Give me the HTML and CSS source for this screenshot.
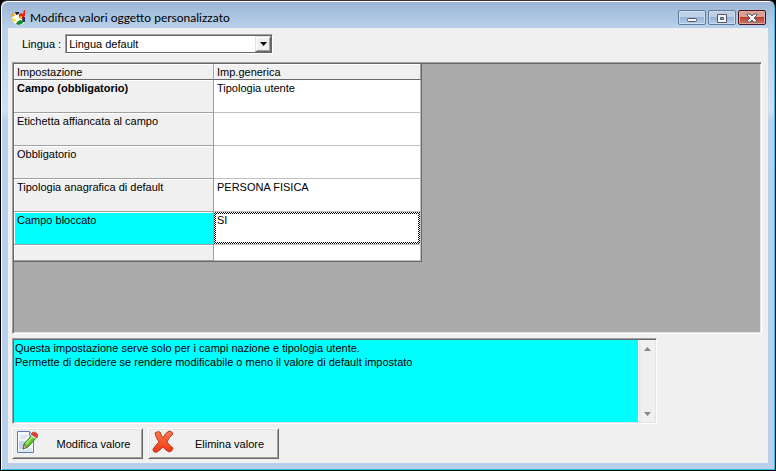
FILE: index.html
```html
<!DOCTYPE html>
<html lang="it">

<head>
    <meta charset="UTF-8" />
    <meta name="viewport" content="width=device-width, initial-scale=1.0" />
    <title>Modifica valori oggetto personalizzato</title>
    <link rel="stylesheet" href="styles.css">
</head>

<body>
    <div class="window">
        <header class="titlebar">
            <svg class="app-icon" width="16" height="16" viewBox="0 0 16 16">
                <path d="M2 4l4-2 3 2 3-1 2 2v6l-2 3-5 1-4-2-1-3-1-2z" fill="#fff" />
                <path d="M0 4l3-1 1 2-2 2-2-1z" fill="#f5a81c" />
                <path d="M4 2h4v2l-3 1z" fill="#222" />
                <path d="M1 8l3 1 2 3-4-1z" fill="#ffe600" />
                <path d="M8 4l3-1 1 1 1-4h1v6l-3 3-3-1z" fill="#e8201c" />
                <path d="M8 7l3-1v2l-2 1z" fill="#ffd21c" />
                <path d="M12 7h2v5h-2l-1-2z" fill="#25335e" />
                <path d="M6 12l3-2 3 1v2l-4 2-3-1z" fill="#128a2c" />
            </svg>
            <h1 class="title">Modifica valori oggetto personalizzato</h1>
            <div class="window-buttons">
                <button type="button" class="win-btn" aria-label="Riduci a icona">
                    <svg width="12" height="12" viewBox="0 0 12 12">
                        <rect x="1.500" y="6.500" width="9" height="3" rx="1" fill="#f5f5f5" stroke="#535666" />
                    </svg>
                </button>
                <button type="button" class="win-btn" aria-label="Ingrandisci">
                    <svg width="12" height="12" viewBox="0 0 12 12">
                        <path d="M1.500 2.500h9v8h-9z" fill="#f5f5f5" stroke="#535666" />
                        <path d="M4.500 5.500h3v2h-3z" fill="#8fb0d4" stroke="#535666" />
                    </svg>
                </button>
                <button type="button" class="win-btn win-close" aria-label="Chiudi">
                    <svg width="12" height="12" viewBox="0 0 12 12">
                        <path d="M1 2h3l2 2 2-2h3v1L8 6l3 3v1H8L6 8l-2 2H1V9l3-3-3-3z" fill="#fff" stroke="#535666" />
                    </svg>
                </button>
            </div>
        </header>

        <main class="content">
            <div class="language">
                <label for="lingua">Lingua :</label>
                <div class="combo">
                    <select id="lingua">
                        <option>Lingua default</option>
                    </select>
                    <span class="combo-arrow">
                        <svg width="7" height="4" viewBox="0 0 7 4">
                            <path d="M0 0h7L3.5 4z" fill="#000" />
                        </svg>
                    </span>
                </div>
            </div>

            <div class="grid-panel">
                <table class="grid">
                    <thead>
                        <tr>
                            <th scope="col">Impostazione</th>
                            <th scope="col">Imp.generica</th>
                        </tr>
                    </thead>
                    <tbody>
                        <tr>
                            <th scope="row" class="required">Campo (obbligatorio)</th>
                            <td>Tipologia utente</td>
                        </tr>
                        <tr>
                            <th scope="row">Etichetta affiancata al campo</th>
                            <td></td>
                        </tr>
                        <tr>
                            <th scope="row">Obbligatorio</th>
                            <td></td>
                        </tr>
                        <tr>
                            <th scope="row">Tipologia anagrafica di default</th>
                            <td>PERSONA FISICA</td>
                        </tr>
                        <tr class="selected">
                            <th scope="row">Campo bloccato</th>
                            <td>SI</td>
                        </tr>
                        <tr class="last">
                            <th scope="row"></th>
                            <td></td>
                        </tr>
                    </tbody>
                </table>
            </div>

            <div class="help">
                <textarea class="help-text" aria-label="Descrizione" readonly>Questa impostazione serve solo per i campi nazione e tipologia utente.
Permette di decidere se rendere modificabile o meno il valore di default impostato</textarea>
                <div class="scrollbar">
                    <svg width="7" height="4" viewBox="0 0 7 4">
                        <path d="M0 4h7L3.5 0z" fill="#868686" />
                    </svg>
                    <svg width="7" height="4" viewBox="0 0 7 4">
                        <path d="M0 0h7L3.5 4z" fill="#868686" />
                    </svg>
                </div>
            </div>

            <div class="actions">
                <button type="button" class="action">
                    <svg width="22" height="24" viewBox="0 0 22 24">
                        <path d="M1.500 1.500h12l4 4v17h-16z" fill="#f4f8fe" stroke="#5b7cae" />
                        <path d="M13.500 1.500v4h4" fill="#d5e2f5" stroke="#5b7cae" />
                        <path d="M4 6h8M4 8h6" stroke="#c3d2e8" />
                        <path d="M3 11h6v8H3z" fill="#c5d6ee" />
                        <path d="M11 19h5M3 21h13" stroke="#c3d2e8" />
                        <path d="M7 19l1-5 8-9 4 3-8 9z" fill="#62c92f" stroke="#2c7d16" />
                        <path d="M10 14l7-8" stroke="#a9ee78" stroke-width="1.500" />
                        <path d="M7 19l1-4 3 2z" fill="#e8c79a" stroke="#5d5238" stroke-width=".6" />
                        <path d="M14 5l2-2 5 4-2 2z" fill="#dcdcdc" />
                        <path d="M15 4c2-4 9-1 6 4z" fill="#e2402c" stroke="#b12a1b" stroke-width=".6" />
                    </svg>
                    <span>Modifica valore</span>
                </button>
                <button type="button" class="action">
                    <svg width="22" height="24" viewBox="0 0 22 24">
                        <defs>
                            <linearGradient id="red" x1="0" y1="0" x2="0" y2="1">
                                <stop offset="0" stop-color="#ff7a50" />
                                <stop offset="1" stop-color="#ee3510" />
                            </linearGradient>
                        </defs>
                        <path d="M3 3Q5 1 8 2Q9 5 11 8Q13 3 17 1Q20 1 21 4Q17 7 15 12Q17 15 21 18Q21 21 17 22Q13 20 11 17Q8 20 5 22Q1 23 1 19Q4 15 7 12Q4 8 3 3z" fill="url(#red)" stroke="#bd3a20" />
                    </svg>
                    <span>Elimina valore</span>
                </button>
            </div>
        </main>
    </div>
</body>

</html>
```
FILE: styles.css
```css
* {
    box-sizing: border-box;
}

body {
    margin: 0;
    background: #000;
    color: #000;
    font: 11px/14px "Liberation Sans", Arial, sans-serif;
}

button,
select,
textarea {
    font: inherit;
    color: inherit;
}

/* window frame */
.window {
    display: flex;
    flex-direction: column;
    min-height: 100vh;
    padding: 0 6px 7px;
    border: 1px solid #000;
    border-top-color: #35303a;
    border-radius: 7px 7px 0 0;
    background: linear-gradient(#9ab4d3, #b9d1ea 27px, #cfe0f2 110px, #b9d1ea 120px, #b9cfea);
    box-shadow: inset 1px 1px #fff, inset -1px -1px #27c5e4;
}

.titlebar {
    display: flex;
    align-items: center;
    height: 27px;
    padding: 6px 3px 0 4px;
}

.title {
    flex: 1;
    margin: 0 0 0 3px;
    font: 12px/18px Lato, "Open Sans", sans-serif;
}

.window-buttons {
    display: flex;
    gap: 2px;
}

.win-btn {
    display: flex;
    align-items: center;
    justify-content: center;
    width: 28px;
    height: 15px;
    padding: 0;
    border: 1px solid #5f7a9d;
    border-radius: 2px;
    background: linear-gradient(#bdd0e6 45%, #96b4d5 50%, #b4cfe9);
    box-shadow: inset 0 0 0 1px #cfdeee;
}

.win-close {
    border-color: #4b1420;
    background: linear-gradient(#dda097 45%, #b8402d 50%, #d27a66);
    box-shadow: inset 0 0 0 1px #e0a9a0;
}

.content {
    display: flex;
    flex: 1;
    flex-direction: column;
    gap: 4px;
    margin: 0 1px;
    padding: 6px 6px 4px 4px;
    background: #f0f0f0;
}

/* language */
.language {
    display: flex;
    align-items: center;
    gap: 4px;
    margin-bottom: 4px;
    padding-left: 10px;
}

.combo {
    position: relative;
    width: 208px;
    border: 2px solid;
    border-color: #a0a0a0 #fff #fff #a0a0a0;
}

.combo select {
    display: block;
    width: 100%;
    height: 16px;
    padding: 0 20px 0 2px;
    border: 0;
    border-radius: 0;
    background: #fff;
    box-shadow: 0 0 0 1px #696969;
    appearance: none;
}

.combo-arrow {
    position: absolute;
    top: 0;
    right: 0;
    bottom: 0;
    display: flex;
    align-items: center;
    justify-content: center;
    width: 16px;
    border: 1px solid;
    border-color: #e3e3e3 #696969 #696969 #e3e3e3;
    background: #f0f0f0;
    box-shadow: inset 1px 1px #fff, inset -1px -1px #a0a0a0;
    pointer-events: none;
}

/* settings grid */
.grid-panel {
    flex: 1;
    padding: 1px;
    border: 1px solid;
    border-color: #a0a0a0 #fff #fff #a0a0a0;
    background: #ababab;
    box-shadow: inset 1px 1px #696969, inset -1px -1px #e3e3e3;
}

.grid {
    width: 408px;
    border-right: 1px solid #696969;
    border-bottom: 1px solid #696969;
    border-spacing: 0;
    table-layout: fixed;
}

.grid th,
.grid td {
    height: 33px;
    padding: 1px 3px 0;
    border-right: 1px solid #a0a0a0;
    border-bottom: 1px solid #a0a0a0;
    text-align: left;
    vertical-align: top;
    font-weight: normal;
}

.grid th {
    background: #f0f0f0;
    box-shadow: inset 1px 1px #fff;
}

.grid td {
    border-right-color: #c0c0c0;
    border-bottom-color: #c0c0c0;
    background: #fff;
}

.grid thead th {
    height: 16px;
    border-bottom-color: #696969;
}

.grid thead th:first-child {
    width: 200px;
}

.grid .required {
    font-weight: bold;
}

.grid .selected th {
    background: #0ff;
}

/* checkered focus frame */
.grid .selected td {
    background:
        linear-gradient(#fff, #fff) 2px 2px / calc(100% - 4px) calc(100% - 4px) no-repeat,
        repeating-conic-gradient(#000 0 25%, #fff 0 50%) 0 0 / 2px 2px;
    background-clip: padding-box;
}

.grid .last th,
.grid .last td {
    height: 16px;
}

/* description */
.help {
    display: flex;
    width: 86%;
    height: 86px;
    padding: 1px;
    border: 1px solid;
    border-color: #a0a0a0 #fff #fff #a0a0a0;
    box-shadow: inset 1px 1px #696969, inset -1px -1px #e3e3e3;
}

.help-text {
    flex: 1;
    padding: 1px;
    border: 0;
    border-right: 1px solid #fff;
    background: #0ff;
    outline: 0;
    overflow: hidden;
    resize: none;
}

.scrollbar {
    display: flex;
    flex-direction: column;
    align-items: center;
    justify-content: space-between;
    width: 16px;
    padding: 7px 0 6px;
    background: linear-gradient(90deg, #e6e6e6, #f0f0f0 3px, #f0f0f0);
}

/* buttons */
.actions {
    display: flex;
    gap: 5px;
}

.action {
    display: flex;
    align-items: center;
    width: 131px;
    height: 31px;
    padding: 0 3px 4px;
    border: 1px solid;
    border-color: #fff #696969 #696969 #fff;
    background: #f0f0f0;
    box-shadow: inset 1px 1px #e3e3e3, inset -1px -1px #a0a0a0;
}

.action span {
    flex: 1;
    padding: 4px 0 0 10px;
}
```
